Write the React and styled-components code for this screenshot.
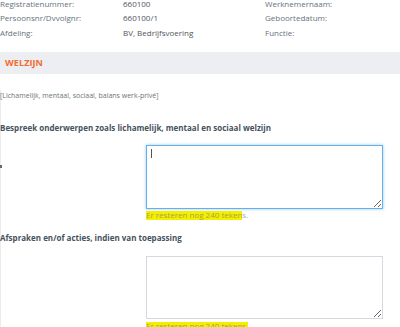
import React from "react";
import styled, { createGlobalStyle, css } from "styled-components";

const Global = createGlobalStyle`
  html, body { margin: 0; padding: 0; background: #fff; overflow: hidden; }
  body { font-family: "Open Sans", "Liberation Sans", sans-serif; }
`;

const Page = styled.div`
  width: 400px;
  height: 327px;
  overflow: hidden;
  position: relative;
`;

const InfoGrid = styled.div`
  display: grid;
  grid-template-columns: 123px 142px 1fr;
  grid-auto-rows: 14.5px;
  margin-top: -3.5px;
  font-size: 8px;
  line-height: 14.5px;
`;

const Label = styled.div`
  color: #66727d;
  white-space: nowrap;
`;

const Value = styled.div`
  color: #4f555b;
  white-space: nowrap;
`;

const Band = styled.div`
  margin-top: 12px;
  height: 22px;
  background: #eceef1;
  padding-left: 5px;
  font-size: 9px;
  font-weight: 700;
  line-height: 22px;
  color: #f26b2f;
  letter-spacing: 0.1px;
`;

const Body = styled.div`
  border-left: 1px solid #ececec;
  padding-bottom: 40px;
`;

const Hint = styled.div`
  margin-top: 16px;
  margin-left: -1px;
  font-size: 7px;
  line-height: 12px;
  color: #6c747b;
  white-space: nowrap;
`;

const Heading = styled.div`
  margin-top: ${(p) => p.$gap}px;
  margin-left: -1px;
  font-size: 8px;
  font-weight: 700;
  line-height: 12px;
  color: #46525d;
  white-space: nowrap;
`;

const FieldRow = styled.div`
  display: grid;
  grid-template-columns: 145px 237px;
  margin-top: 11.5px;
`;

const LabelCell = styled.div`
  position: relative;
`;

const Tick = styled.div`
  margin-top: 20px;
  margin-left: -1px;
  width: 2px;
  height: 3px;
  background: #6a6a6a;
`;

const FieldCell = styled.div`
  position: relative;
`;

const Area = styled.textarea`
  display: block;
  box-sizing: border-box;
  width: 237px;
  height: ${(p) => p.$h}px;
  margin: 0;
  padding: 4px 5px;
  font-family: inherit;
  font-size: 8px;
  border-radius: 0;
  outline: none;
  caret-color: transparent;
  resize: vertical;
  ${(p) =>
    p.$active
      ? css`
          border: 1px solid #66afe9;
          box-shadow: 0 0 3px rgba(102, 175, 233, 0.7);
        `
      : css`
          border: 1px solid #d3d9df;
          box-shadow: none;
        `}
`;

const Caret = styled.span`
  position: absolute;
  left: 5px;
  top: 4px;
  width: 1px;
  height: 9px;
  background: #555;
`;

const Counter = styled.div`
  margin-top: ${(p) => p.$gap || 0}px;
  font-size: 8px;
  line-height: 12px;
  color: #a3a36a;
  white-space: nowrap;
`;

const Mark = styled.span`
  background: linear-gradient(to bottom, transparent 20%, #f4ef00 20%, #f4ef00 100%);
  color: #a6a44a;
`;

const Rest = styled.span`
  color: #a9aeb3;
`;

const rows = [
  ["Registratienummer:", "660100", "Werknemernaam:"],
  ["Persoonsnr/Dvvolgnr:", "660100/1", "Geboortedatum:"],
  ["Afdeling:", "BV, Bedrijfsvoering", "Functie:"],
];

export default function App() {
  return (
    <Page>
      <Global />
      <InfoGrid>
        {rows.map(([a, b, c]) => (
          <React.Fragment key={a}>
            <Label>{a}</Label>
            <Value>{b}</Value>
            <Label>{c}</Label>
          </React.Fragment>
        ))}
      </InfoGrid>
      <Band>WELZIJN</Band>
      <Body>
        <Hint>[Lichamelijk, mentaal, sociaal, balans werk-privé]</Hint>
        <Heading $gap={19.5}>
          Bespreek onderwerpen zoals lichamelijk, mentaal en sociaal welzijn
        </Heading>
        <FieldRow>
          <LabelCell>
            <Tick />
          </LabelCell>
          <FieldCell>
            <Area $active $h={64} defaultValue="" />
            <Caret />
            <Counter>
              <Mark>Er resteren nog 240 teken</Mark>
              <Rest>s.</Rest>
            </Counter>
          </FieldCell>
        </FieldRow>
        <Heading $gap={11}>Afspraken en/of acties, indien van toepassing</Heading>
        <FieldRow>
          <LabelCell />
          <FieldCell>
            <Area $h={63} defaultValue="" />
            <Counter $gap={1}>
              <Mark>Er resteren nog 240 tekens.</Mark>
            </Counter>
          </FieldCell>
        </FieldRow>
      </Body>
    </Page>
  );
}
